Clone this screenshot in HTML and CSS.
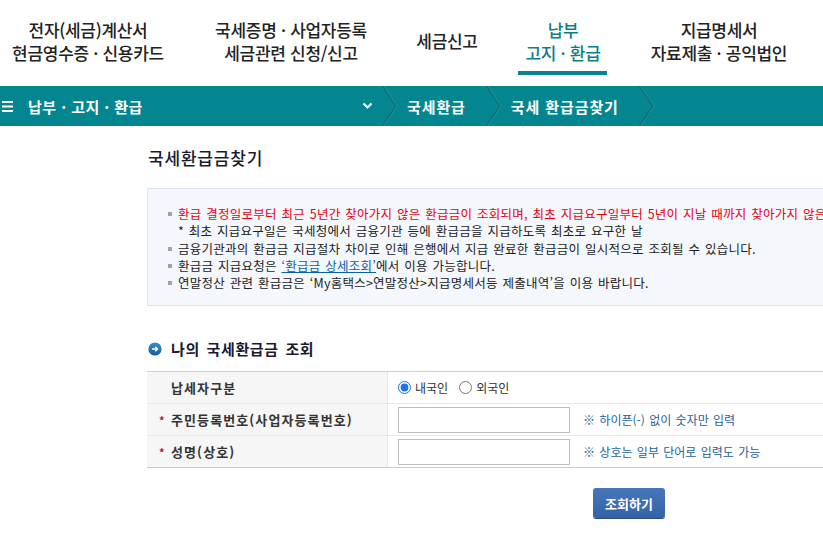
FILE: index.html
```html
<!DOCTYPE html>
<html lang="ko">
<head>
<meta charset="utf-8">
<title>국세환급금찾기</title>
<link rel="stylesheet" href="styles.css">
</head>
<body>
<header class="gnb">
  <div class="gnb-item gnb-item--w1"><span>전자(세금)계산서</span><span>현금영수증 · 신용카드</span></div>
  <div class="gnb-item gnb-item--w2"><span>국세증명 · 사업자등록</span><span>세금관련 신청/신고</span></div>
  <div class="gnb-item gnb-item--w3"><span>세금신고</span></div>
  <div class="gnb-item gnb-item--w4 gnb-item--active"><span>납부</span><span>고지 · 환급</span><i class="gnb-bar"></i></div>
  <div class="gnb-item gnb-item--w5"><span>지급명세서</span><span>자료제출 · 공익법인</span></div>
</header>

<nav class="lnb">
  <div class="lnb-menu">
    <svg class="lnb-burger" width="11" height="11" viewBox="0 0 11 11"><rect x="0" y="0" width="11" height="2" fill="#fff"/><rect x="0" y="4.5" width="11" height="2" fill="#fff"/><rect x="0" y="9" width="11" height="2" fill="#fff"/></svg>
    <span class="lnb-title">납부 · 고지 · 환급</span>
    <svg class="lnb-down" width="11" height="8" viewBox="0 0 11 8"><polyline points="1.5,1.5 5.5,5.5 9.5,1.5" fill="none" stroke="#fff" stroke-width="2.2"/></svg>
  </div>
  <svg class="lnb-sep" width="16" height="40" viewBox="0 0 16 40"><polyline points="0.5,0 14,20 0.5,40" fill="none" stroke="#13606a" stroke-width="1.2"/><polyline points="1.5,0 15,20 1.5,40" fill="none" stroke="#2a9aa3" stroke-width="0.8"/></svg>
  <span class="lnb-crumb">국세환급</span>
  <svg class="lnb-sep" width="16" height="40" viewBox="0 0 16 40"><polyline points="0.5,0 14,20 0.5,40" fill="none" stroke="#13606a" stroke-width="1.2"/><polyline points="1.5,0 15,20 1.5,40" fill="none" stroke="#2a9aa3" stroke-width="0.8"/></svg>
  <span class="lnb-crumb">국세 환급금찾기</span>
  <svg class="lnb-sep" width="16" height="40" viewBox="0 0 16 40"><polyline points="0.5,0 14,20 0.5,40" fill="none" stroke="#13606a" stroke-width="1.2"/><polyline points="1.5,0 15,20 1.5,40" fill="none" stroke="#2a9aa3" stroke-width="0.8"/></svg>
</nav>

<main class="content">
  <h1 class="page-title">국세환급금찾기</h1>

  <div class="info-box">
    <ul class="info-list">
      <li class="info-item"><span class="info-text"><span class="red">환급 결정일로부터 최근 5년간 찾아가지 않은 환급금이 조회되며, 최초 지급요구일부터 5년이 지날 때까지 찾아가지 않은 환급금은 국고에 귀속됩니다.</span><br>* 최초 지급요구일은 국세청에서 금융기관 등에 환급금을 지급하도록 최초로 요구한 날</span></li>
      <li class="info-item"><span class="info-text">금융기관과의 환급금 지급절차 차이로 인해 은행에서 지급 완료한 환급금이 일시적으로 조회될 수 있습니다.</span></li>
      <li class="info-item"><span class="info-text">환급금 지급요청은 <a class="link" href="#">‘환급금 상세조회’</a>에서 이용 가능합니다.</span></li>
      <li class="info-item"><span class="info-text">연말정산 관련 환급금은 ‘My홈택스&gt;연말정산&gt;지급명세서등 제출내역’을 이용 바랍니다.</span></li>
    </ul>
  </div>

  <h2 class="sec-title">
    <svg class="sec-icon" width="14" height="14" viewBox="0 0 14 14">
      <defs><linearGradient id="g" x1="0" y1="0" x2="0" y2="1"><stop offset="0" stop-color="#3f8fd0"/><stop offset="1" stop-color="#135a9c"/></linearGradient></defs>
      <circle cx="7" cy="7" r="6.6" fill="url(#g)"/>
      <path d="M4 7 H9.5 M7.3 4.8 L9.6 7 L7.3 9.2" fill="none" stroke="#fff" stroke-width="1.4"/>
    </svg>
    나의 국세환급금 조회
  </h2>

  <div class="form-table">
    <div class="form-row">
      <div class="form-label"><span class="req"></span>납세자구분</div>
      <div class="form-value">
        <label class="radio"><input type="radio" name="kind" checked> 내국인</label>
        <label class="radio"><input type="radio" name="kind"> 외국인</label>
      </div>
    </div>
    <div class="form-row">
      <div class="form-label"><span class="req">*</span>주민등록번호(사업자등록번호)</div>
      <div class="form-value">
        <input class="text-input" type="text">
        <span class="help">※ 하이픈(-) 없이 숫자만 입력</span>
      </div>
    </div>
    <div class="form-row">
      <div class="form-label"><span class="req">*</span>성명(상호)</div>
      <div class="form-value">
        <input class="text-input" type="text">
        <span class="help">※ 상호는 일부 단어로 입력도 가능</span>
      </div>
    </div>
  </div>

  <div class="btn-area">
    <button class="btn-search" type="button">조회하기</button>
  </div>
</main>
</body>
</html>
```

FILE: styles.css
```css
html, body {
  margin: 0;
  padding: 0;
  overflow: hidden;
  background: #fff;
}
body {
  font-family: "Noto Sans CJK KR", "Noto Sans", "Liberation Sans", sans-serif;
  color: #222;
  width: 823px;
  height: 542px;
}

/* Top GNB */
.gnb {
  display: flex;
  height: 86px;
}
.gnb-item {
  position: relative;
  display: flex;
  flex-direction: column;
  align-items: center;
  justify-content: center;
  padding-bottom: 5px;
  box-sizing: border-box;
  height: 86px;
  font-size: 17px;
  font-weight: 500;
  line-height: 23px;
  letter-spacing: -0.3px;
  color: #222;
  white-space: nowrap;
}
.gnb-item--w1 { width: 176px; }
.gnb-item--w2 { width: 230px; }
.gnb-item--w3 { width: 82px; }
.gnb-item--w4 { width: 150px; }
.gnb-item--w5 { width: 162px; }
.gnb-item--active { color: #087f89; }
.gnb-bar {
  position: absolute;
  left: 30px;
  bottom: 11px;
  width: 89px;
  height: 4px;
  background: #07848e;
}

/* Teal location bar */
.lnb {
  display: flex;
  align-items: center;
  height: 40px;
  background: #03868f;
  color: #fff;
  overflow: hidden;
}
.lnb-menu {
  display: flex;
  align-items: center;
  width: 382px;
  height: 40px;
  flex: none;
}
.lnb-burger {
  margin-left: 2px;
  flex: none;
}
.lnb-title {
  margin-left: 15px;
  font-size: 15px;
  font-weight: 700;
  letter-spacing: 0.45px;
}
.lnb-down {
  margin-left: auto;
  margin-right: 9px;
}
.lnb-sep {
  flex: none;
  display: block;
}
.lnb-crumb {
  padding: 0 20px 0 9px;
  font-size: 15px;
  font-weight: 700;
  letter-spacing: 0.9px;
  white-space: nowrap;
}

/* Content */
.content {
  margin-left: 147px;
  width: 964px;
}
.page-title {
  margin: 21px 0 0 1px;
  font-size: 17px;
  font-weight: 500;
  line-height: 22px;
  color: #1a1a30;
  letter-spacing: 0.8px;
}
.info-box {
  margin-top: 19px;
  border: 1px solid #dbe3ee;
  background: #f4f7fc;
  padding: 16px 0 14px;
}
.info-list {
  margin: 0;
  padding: 0 0 0 20px;
  list-style: none;
}
.info-item {
  display: flex;
  align-items: flex-start;
  font-size: 12.5px;
  line-height: 17.25px;
  white-space: nowrap;
  letter-spacing: 0.25px;
  word-spacing: 1px;
}
.info-item::before {
  content: "";
  flex: none;
  width: 4px;
  height: 4px;
  margin: 7px 6px 0 0;
  background: #a3a3a3;
}
.red { color: #e60012; }
.link {
  color: #0b5fa5;
  text-decoration: underline;
}

.sec-title {
  display: flex;
  align-items: center;
  margin: 32px 0 0 1px;
  font-size: 15px;
  font-weight: 700;
  line-height: 22px;
  color: #1a1a30;
  letter-spacing: 0.6px;
  word-spacing: 2px;
}
.sec-icon {
  margin-right: 9px;
}

.form-table {
  margin-top: 11px;
  border-top: 1px solid #cfcfcf;
  border-bottom: 1px solid #c9c9c9;
}
.form-row {
  display: flex;
  height: 31px;
}
.form-row + .form-row {
  border-top: 1px solid #e6e6e6;
}
.form-label {
  display: flex;
  align-items: center;
  width: 228px;
  padding-left: 12px;
  background: #f6f6f6;
  border-right: 1px solid #e6e6e6;
  font-size: 13px;
  font-weight: 700;
  color: #333;
  letter-spacing: 1.1px;
}
.req {
  display: inline-block;
  width: 12px;
  color: #c8102e;
  font-size: 11px;
  letter-spacing: 0;
}
.form-value {
  display: flex;
  align-items: center;
  padding-left: 10px;
  font-size: 12px;
}
.radio {
  display: flex;
  align-items: center;
  margin-right: 11px;
  color: #333;
}
.radio input {
  margin: 0 4px 0 0;
  width: 13px;
  height: 13px;
  accent-color: #1a73e8;
}
.text-input {
  box-sizing: border-box;
  width: 172px;
  height: 26px;
  margin: 0;
  border: 1px solid #bdbdbd;
  padding: 0 4px;
}
.help {
  margin-left: 13px;
  color: #1d5f98;
  word-spacing: 1px;
}

.btn-area {
  display: flex;
  justify-content: center;
  margin-top: 20px;
}
.btn-search {
  width: 72px;
  height: 30px;
  border: 0;
  border-radius: 3px;
  background: linear-gradient(#4677ba, #3562a6);
  box-shadow: 0 1px 0 #2b4f86;
  color: #fff;
  font-family: inherit;
  font-size: 13px;
  font-weight: 700;
  padding: 0;
}
```
